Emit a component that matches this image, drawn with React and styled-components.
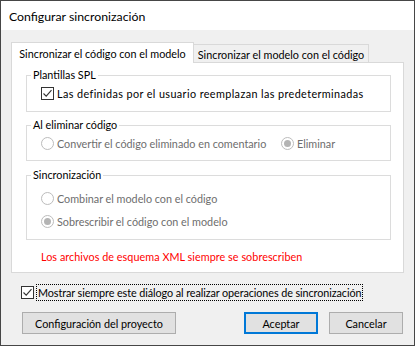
import React from "react";
import styled, { createGlobalStyle } from "styled-components";

const GlobalStyle = createGlobalStyle`
  html, body { margin: 0; padding: 0; background: #ffffff; }
  body { font-family: Lato, "Liberation Sans", sans-serif; font-size: 10.8px; color: #000; }
  * { box-sizing: border-box; }
`;

const Window = styled.div`
  width: 415px;
  height: 346px;
  border: 1px solid #464646;
  display: flex;
  flex-direction: column;
  background: #f0f0f0;
  overflow: hidden;
`;

const TitleBar = styled.div`
  height: 29px;
  flex: 0 0 29px;
  background: #ffffff;
  display: flex;
  align-items: center;
  padding: 1px 0 0 8px;
  font-size: 12.3px;
`;

const Body = styled.div`
  flex: 1;
  display: flex;
  flex-direction: column;
  padding: 12px 10px 0 10px;
`;

const TabStrip = styled.div`
  display: flex;
  align-items: flex-end;
  height: 20px;
`;

const Tab = styled.div`
  position: relative;
  display: flex;
  align-items: center;
  justify-content: center;
  white-space: nowrap;
  border: 1px solid #d9d9d9;
  ${(p) =>
    p.$active
      ? `
    width: 183px;
    height: 21px;
    margin-bottom: -1px;
    border-bottom: none;
    background: #ffffff;
    z-index: 1;
    padding-top: 1px;
  `
      : `
    width: 175px;
    height: 18px;
    border-left: none;
    border-bottom: none;
    background: #f0f0f0;
    padding-top: 1px;
  `}
`;

const Panel = styled.div`
  width: 393px;
  height: 211px;
  flex: 0 0 211px;
  background: #ffffff;
  border: 1px solid #d9d9d9;
  padding: 5px 12px 0 14px;
  display: flex;
  flex-direction: column;
`;

const Group = styled.fieldset`
  margin: ${(p) => p.$gap || 0}px 0 0 0;
  border: 1px solid #dcdcdc;
  padding: ${(p) => p.$pt}px 0 ${(p) => p.$pb}px 4px;
  min-width: 0;
  display: flex;
  flex-direction: column;
  gap: 6px;
`;

const Legend = styled.legend`
  padding: 0 2px;
  line-height: 14px;
  height: 14px;
  color: #000;
`;

const OptionRow = styled.div`
  display: flex;
  align-items: center;
  height: 17px;
  padding-left: 10px;
`;

const Option = styled.label`
  display: flex;
  align-items: center;
  gap: 3px;
  height: 17px;
  white-space: nowrap;
  letter-spacing: ${(p) => p.$spacing || 0}px;
  flex: ${(p) => (p.$width ? `0 0 ${p.$width}px` : "0 0 auto")};
  color: ${(p) => (p.$disabled ? "#6d6d6d" : "#000")};
`;

const CheckBoxBox = styled.span`
  width: 13px;
  height: 13px;
  flex: 0 0 13px;
  border: 1px solid #333333;
  background: #ffffff;
  display: flex;
  align-items: center;
  justify-content: center;
`;

const RadioCircle = styled.span`
  width: 13px;
  height: 13px;
  flex: 0 0 13px;
  border-radius: 50%;
  border: 1px solid #bcbcbc;
  background: #ffffff;
  display: flex;
  align-items: center;
  justify-content: center;
  &::after {
    content: "";
    display: ${(p) => (p.$checked ? "block" : "none")};
    width: 7px;
    height: 7px;
    border-radius: 50%;
    background: #b4b4b4;
  }
`;

const Warning = styled.div`
  margin: 9px 0 0 15px;
  line-height: 15px;
  color: #ff0000;
  white-space: nowrap;
  letter-spacing: 0.05px;
`;

const BottomCheckRow = styled.div`
  margin: 11px 0 0 10px;
  display: flex;
  align-items: center;
  height: 17px;
  gap: 2px;
`;

const FocusText = styled.span`
  height: 17px;
  display: flex;
  align-items: center;
  padding: 0 1px;
  border: 1px dotted #000000;
  white-space: nowrap;
  letter-spacing: -0.08px;
`;

const ButtonRow = styled.div`
  margin-top: 11px;
  display: flex;
  align-items: center;
  padding: 0 1px 0 11px;
`;

const Button = styled.button`
  height: 22px;
  width: ${(p) => p.$w}px;
  margin-left: ${(p) => p.$ml || 0}px;
  background: #e1e1e1;
  border: ${(p) => (p.$default ? "2px solid #0078d7" : "1px solid #adadad")};
  font-family: inherit;
  font-size: inherit;
  color: #000;
  padding: 0;
  display: flex;
  align-items: center;
  justify-content: center;
`;

const Spacer = styled.div`
  flex: 1;
`;

function Check({ color = "#333" }) {
  return (
    <svg width="11" height="11" viewBox="0 0 11 11">
      <path d="M1.5 5.5 L4.2 8.2 L9.5 2.2" fill="none" stroke={color} strokeWidth="1.1" />
    </svg>
  );
}

export default function App() {
  return (
    <>
      <GlobalStyle />
      <Window>
        <TitleBar>Configurar sincronización</TitleBar>
        <Body>
          <TabStrip>
            <Tab $active>Sincronizar el código con el modelo</Tab>
            <Tab>Sincronizar el modelo con el código</Tab>
          </TabStrip>
          <Panel>
            <Group $pt={3} $pb={9}>
              <Legend>Plantillas SPL</Legend>
              <OptionRow>
                <Option $spacing={0.4}>
                  <CheckBoxBox>
                    <Check />
                  </CheckBoxBox>
                  Las definidas por el usuario reemplazan las predeterminadas
                </Option>
              </OptionRow>
            </Group>
            <Group $gap={6} $pt={3} $pb={8}>
              <Legend>Al eliminar código</Legend>
              <OptionRow>
                <Option $disabled $width={240}>
                  <RadioCircle />
                  Convertir el código eliminado en comentario
                </Option>
                <Option $disabled>
                  <RadioCircle $checked />
                  Eliminar
                </Option>
              </OptionRow>
            </Group>
            <Group $gap={7} $pt={8} $pb={9}>
              <Legend>Sincronización</Legend>
              <OptionRow>
                <Option $disabled>
                  <RadioCircle />
                  Combinar el modelo con el código
                </Option>
              </OptionRow>
              <OptionRow>
                <Option $disabled>
                  <RadioCircle $checked />
                  Sobrescribir el código con el modelo
                </Option>
              </OptionRow>
            </Group>
            <Warning>Los archivos de esquema XML siempre se sobrescriben</Warning>
          </Panel>
          <BottomCheckRow>
            <CheckBoxBox>
              <Check />
            </CheckBoxBox>
            <FocusText>Mostrar siempre este diálogo al realizar operaciones de sincronización</FocusText>
          </BottomCheckRow>
          <ButtonRow>
            <Button $w={154}>Configuración del proyecto</Button>
            <Spacer />
            <Button $w={74} $default>Aceptar</Button>
            <Button $w={74} $ml={11}>Cancelar</Button>
          </ButtonRow>
        </Body>
      </Window>
    </>
  );
}
